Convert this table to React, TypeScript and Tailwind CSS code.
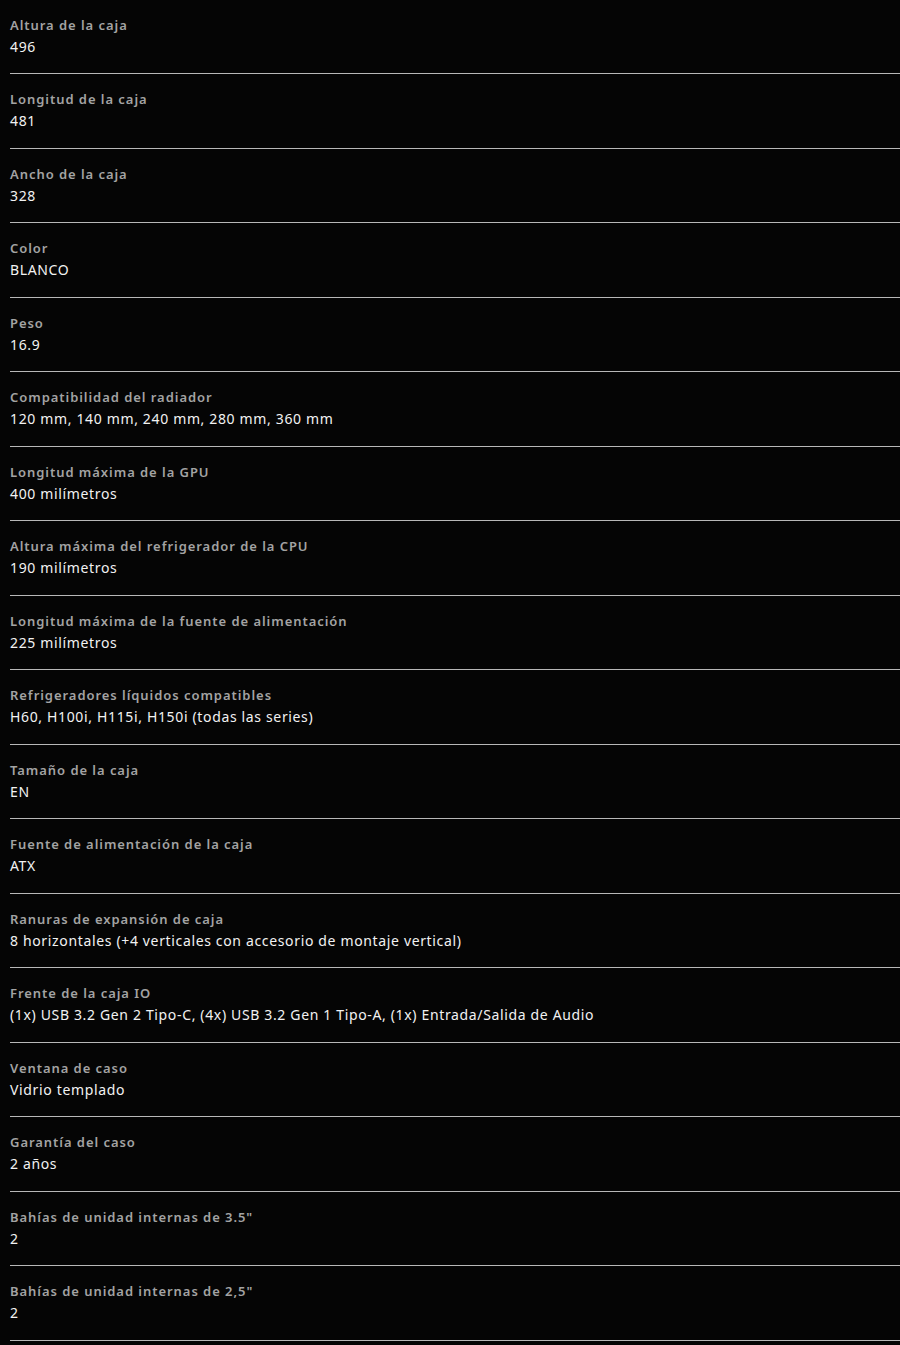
const specs = [
  { label: 'Altura de la caja', value: '496' },
  { label: 'Longitud de la caja', value: '481' },
  { label: 'Ancho de la caja', value: '328' },
  { label: 'Color', value: 'BLANCO' },
  { label: 'Peso', value: '16.9' },
  { label: 'Compatibilidad del radiador', value: '120 mm, 140 mm, 240 mm, 280 mm, 360 mm' },
  { label: 'Longitud máxima de la GPU', value: '400 milímetros' },
  { label: 'Altura máxima del refrigerador de la CPU', value: '190 milímetros' },
  { label: 'Longitud máxima de la fuente de alimentación', value: '225 milímetros' },
  { label: 'Refrigeradores líquidos compatibles', value: 'H60, H100i, H115i, H150i (todas las series)' },
  { label: 'Tamaño de la caja', value: 'EN' },
  { label: 'Fuente de alimentación de la caja', value: 'ATX' },
  { label: 'Ranuras de expansión de caja', value: '8 horizontales (+4 verticales con accesorio de montaje vertical)' },
  { label: 'Frente de la caja IO', value: '(1x) USB 3.2 Gen 2 Tipo-C, (4x) USB 3.2 Gen 1 Tipo-A, (1x) Entrada/Salida de Audio' },
  { label: 'Ventana de caso', value: 'Vidrio templado' },
  { label: 'Garantía del caso', value: '2 años' },
  { label: 'Bahías de unidad internas de 3.5"', value: '2' },
  { label: 'Bahías de unidad internas de 2,5"', value: '2' },
];

export default function App() {
  return (
    <div className="min-h-[1345px] w-[900px] bg-[#050505] pl-[10px] font-['Noto_Sans',sans-serif]">
      <ul className="-mt-[0.5px]">
        {specs.map((spec) => (
          <li key={spec.label} className="h-[74.5px] border-b border-[#b8b8b8] pt-[14px]">
            <p className="text-[13px] leading-[22px] font-semibold tracking-[0.95px] text-[#a3a3a3]">{spec.label}</p>
            <p className="text-[14px] leading-[22px] tracking-[0.65px] text-[#f2f2f2]">{spec.value}</p>
          </li>
        ))}
      </ul>
    </div>
  );
}
